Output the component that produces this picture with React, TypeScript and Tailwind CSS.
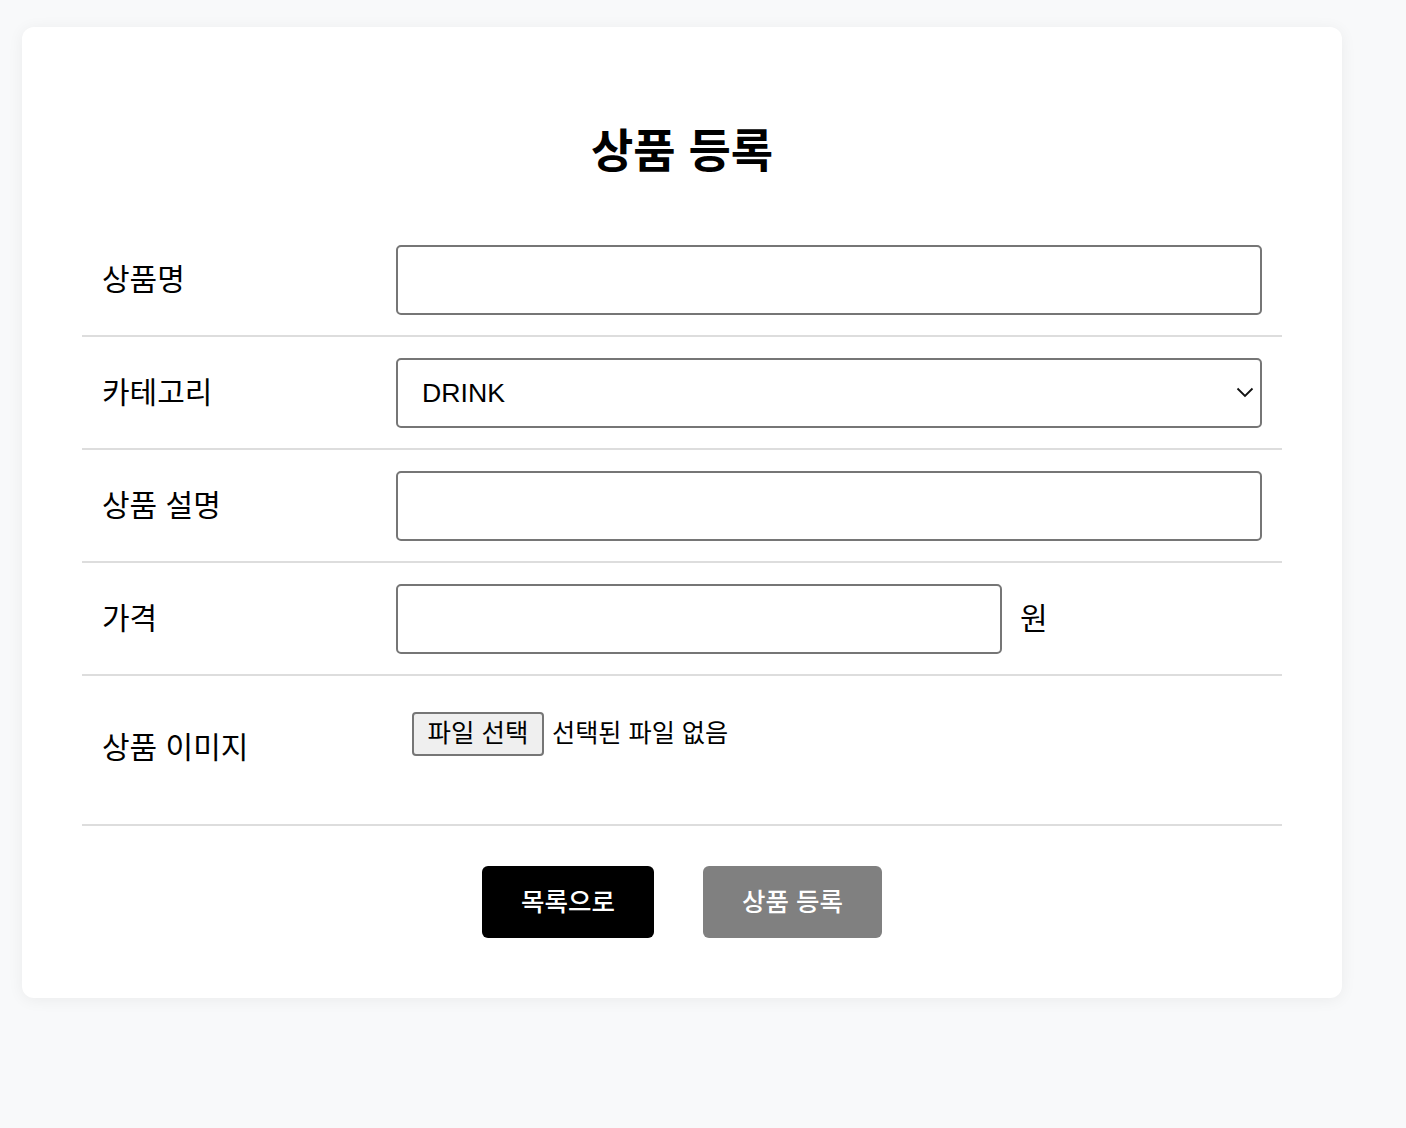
import React from "react";

const font = { fontFamily: '"Liberation Sans", "Noto Sans CJK KR", sans-serif' };

function Row({ label, children }: { label: string; children: React.ReactNode }) {
  return (
    <div className="flex items-center pt-[21px] pb-[20px] px-[20px] border-b-2 border-[#dddddd]">
      <div className="w-[294px] shrink-0 text-[30px] leading-[40px] text-black">{label}</div>
      <div className="flex-1 flex items-center">{children}</div>
    </div>
  );
}

export default function App() {
  return (
    <div className="min-h-screen bg-[#f8f9fa] pt-[27px] pl-[22px] pb-[130px]" style={font}>
      <div className="w-[1320px] bg-white rounded-[12px] shadow-[0_2px_16px_rgba(0,0,0,0.06)] px-[60px] pt-[93px] pb-[60px]">
        <h1 className="text-center text-[46px] leading-[63px] font-bold text-black mb-[41px]">상품 등록</h1>
        <form>
          <Row label="상품명">
            <input
              type="text"
              className="w-[866px] h-[70px] border-2 border-[#767676] rounded-[5px] px-[24px] text-[26px] outline-none bg-white"
            />
          </Row>
          <Row label="카테고리">
            <div className="relative w-[866px]">
              <select
                defaultValue="DRINK"
                className="appearance-none w-full h-[70px] border-2 border-[#767676] rounded-[5px] pl-[24px] pr-[40px] text-[26.67px] text-black bg-white outline-none"
                style={{ fontFamily: '"Liberation Sans", sans-serif' }}
              >
                <option value="DRINK">DRINK</option>
                <option value="FOOD">FOOD</option>
              </select>
              <svg
                className="absolute right-[8px] top-[29px] pointer-events-none"
                width="18"
                height="11"
                viewBox="0 0 18 11"
                fill="none"
              >
                <path d="M1.5 1.5 L9 9 L16.5 1.5" stroke="#111" strokeWidth="1.8" />
              </svg>
            </div>
          </Row>
          <Row label="상품 설명">
            <input
              type="text"
              className="w-[866px] h-[70px] border-2 border-[#767676] rounded-[5px] px-[24px] text-[26px] outline-none bg-white"
            />
          </Row>
          <Row label="가격">
            <input
              type="text"
              className="w-[606px] h-[70px] border-2 border-[#767676] rounded-[5px] px-[24px] text-[26px] outline-none bg-white"
            />
            <span className="ml-[18px] text-[30px] leading-[40px] text-black">원</span>
          </Row>
          <div className="flex items-center h-[150px] px-[20px] border-b-2 border-[#dddddd]">
            <div className="w-[294px] shrink-0 text-[30px] leading-[40px] text-black pb-[5px]">상품 이미지</div>
            <div className="flex-1 self-start pt-[36px] pl-[16px] flex items-center">
              <label className="flex items-center cursor-pointer">
                <span className="w-[132px] h-[44px] flex items-center justify-center bg-[#efefef] border-2 border-[#767676] rounded-[4px] text-[25.5px] leading-none text-black">
                  파일 선택
                </span>
                <span className="ml-[8px] text-[25.2px] leading-none text-black">선택된 파일 없음</span>
                <input type="file" className="hidden" />
              </label>
            </div>
          </div>
          <div className="flex justify-center gap-[49px] mt-[40px]">
            <button
              type="button"
              className="w-[172px] h-[72px] bg-black text-white text-[25.5px] font-medium rounded-[6px]"
            >
              목록으로
            </button>
            <button
              type="button"
              disabled
              className="w-[179px] h-[72px] bg-[#808080] text-white text-[25.5px] font-medium rounded-[6px]"
            >
              상품 등록
            </button>
          </div>
        </form>
      </div>
    </div>
  );
}
